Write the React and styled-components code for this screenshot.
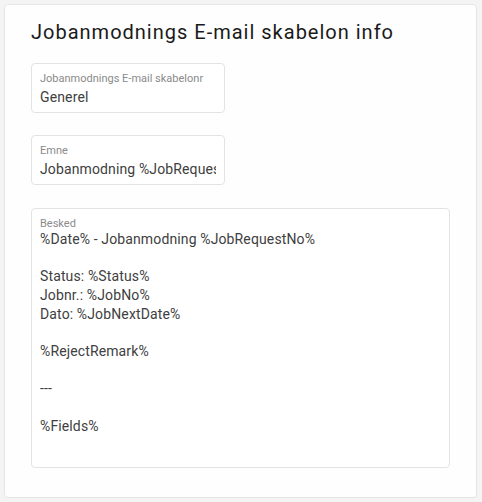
import React from "react";
import styled, { createGlobalStyle } from "styled-components";

const Global = createGlobalStyle`
  html, body { margin: 0; padding: 0; background: #f4f4f4; }
  body { font-family: Roboto, "Noto Sans", sans-serif; }
  * { box-sizing: border-box; }
`;

const Page = styled.div`
  padding: 4px 5px 4px 4px;
`;

const Card = styled.div`
  background: #fefefe;
  border: 1px solid #e6e6e6;
  border-radius: 4px;
  padding: 15px 26px 29px 26px;
  display: flex;
  flex-direction: column;
  align-items: flex-start;
`;

const Title = styled.h1`
  margin: 0 0 19px 0;
  font-size: 20px;
  line-height: 24px;
  font-weight: 400;
  letter-spacing: 1px;
  color: #1a1a1a;
`;

const Field = styled.div`
  width: ${(p) => (p.$full ? "100%" : "194px")};
  height: ${(p) => p.$height || "50px"};
  border: 1px solid #e3e3e3;
  border-radius: 4px;
  background: #fff;
  padding: 8px 8px 0 8px;
  margin-bottom: ${(p) => p.$mb || "0"};
  overflow: hidden;
`;

const Label = styled.div`
  font-size: 11px;
  line-height: 13px;
  color: #8a8a8a;
  white-space: nowrap;
  overflow: hidden;
`;

const Value = styled.div`
  margin-top: ${(p) => p.$gap || "3px"};
  font-size: 14px;
  line-height: 18.67px;
  letter-spacing: 0.13px;
  color: #404040;
  white-space: ${(p) => (p.$multi ? "pre-wrap" : "nowrap")};
  overflow: hidden;
`;

const message = `%Date% - Jobanmodning %JobRequestNo%

Status: %Status%
Jobnr.: %JobNo%
Dato: %JobNextDate%

%RejectRemark%

---

%Fields%`;

export default function App() {
  return (
    <>
      <Global />
      <Page>
        <Card>
          <Title>Jobanmodnings E-mail skabelon info</Title>
          <Field $mb="22px">
            <Label>Jobanmodnings E-mail skabelonr</Label>
            <Value>Generel</Value>
          </Field>
          <Field $mb="23px">
            <Label>Emne</Label>
            <Value>Jobanmodning %JobRequestNo%</Value>
          </Field>
          <Field $full $height="260px">
            <Label>Besked</Label>
            <Value $multi $gap="0px">{message}</Value>
          </Field>
        </Card>
      </Page>
    </>
  );
}
